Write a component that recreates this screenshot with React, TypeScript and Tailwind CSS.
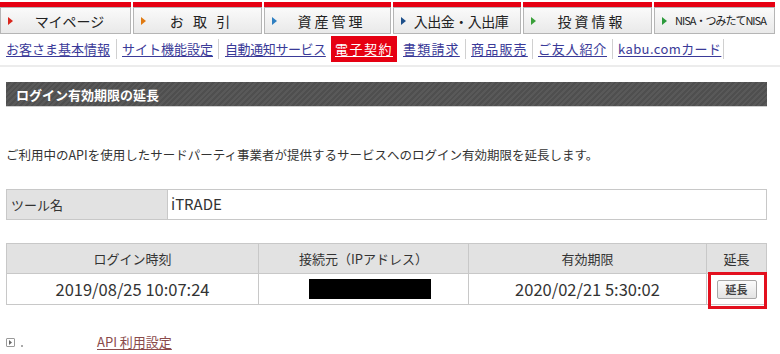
import React from "react";

const tabs = [
  { label: "マイページ", w: 131, color: "#d9261c", cls: "tracking-[0px] text-[14px]" },
  { label: "お 取 引", w: 129, color: "#e07a12", cls: "tracking-[3px] text-[14px]" },
  { label: "資産管理", w: 127, color: "#2f7fc1", cls: "tracking-[3px] text-[14px]" },
  { label: "入出金・入出庫", w: 128, color: "#1d4f8a", cls: "tracking-[-0.5px] text-[14px]" },
  { label: "投資情報", w: 129, color: "#3aa03a", cls: "tracking-[3px] text-[14px]" },
  { label: "NISA・つみたてNISA", w: 121, color: "#2c9a3c", cls: "tracking-[-1px] text-[11px]" },
];

function Sep({ l, r }: { l: string; r: string }) {
  return <span className={`${l} ${r} my-[3px] w-px bg-[#d0d0d0] shrink-0`} />;
}

function Link({ w, t, children }: { w: string; t: string; children: React.ReactNode }) {
  return (
    <span className={`${w} ${t} shrink-0 flex items-center text-[#3a3a98] underline underline-offset-2 whitespace-nowrap`}>
      {children}
    </span>
  );
}

export default function App() {
  return (
    <div
      className="relative w-[780px] h-[354px] overflow-hidden bg-white pt-[2px] text-[#333]"
      style={{ fontFamily: '"Noto Sans CJK JP", "Noto Sans", sans-serif' }}
    >
      {/* Top tabs */}
      <div className="flex gap-[2px]">
        {tabs.map((t, i) => (
          <div key={i} className="flex flex-col shrink-0" style={{ width: t.w }}>
            <div className="h-[5px] bg-[#e60012]" />
            <div className="h-[27px] flex items-center border border-[#b5b5b5] bg-[linear-gradient(#fafafa,#e9e9e9)] pl-[7px] overflow-hidden whitespace-nowrap">
              <svg width="5" height="8" viewBox="0 0 5 8" className="shrink-0">
                <polygon points="0,0 5,4 0,8" fill={t.color} />
              </svg>
              <span
                className={`flex-1 ${t.cls} ${i === 5 ? "text-left pl-[8px]" : "text-center pr-[4px]"} text-[#222] leading-none`}
              >
                {t.label}
              </span>
            </div>
          </div>
        ))}
      </div>

      {/* Sub links */}
      <div className="mt-[2px] h-[26px] flex items-stretch pl-[6px] text-[13px]">
        <Link w="w-[105px]" t="tracking-[0px]">お客さま基本情報</Link>
        <Sep l="ml-[5px]" r="mr-[5px]" />
        <Link w="w-[90px]" t="tracking-[0px]">サイト機能設定</Link>
        <Sep l="ml-[6px]" r="mr-[6px]" />
        <Link w="w-[100px]" t="tracking-[-0.4px]">自動通知サービス</Link>
        <span className="w-[6px] shrink-0" />
        <span className="w-[66px] shrink-0 flex items-center justify-center bg-[#e60012] text-white underline underline-offset-2 tracking-[1.5px] whitespace-nowrap">
          電子契約
        </span>
        <span className="w-[6px] shrink-0" />
        <Link w="w-[57px]" t="tracking-[1.2px]">書類請求</Link>
        <Sep l="ml-[5px]" r="mr-[5px]" />
        <Link w="w-[57px]" t="tracking-[1.2px]">商品販売</Link>
        <Sep l="ml-[4px]" r="mr-[5px]" />
        <Link w="w-[69px]" t="tracking-[0.8px]">ご友人紹介</Link>
        <Sep l="ml-[5px]" r="mr-[5px]" />
        <Link w="w-[100px]" t="tracking-[0.4px]">kabu.comカード</Link>
        <Sep l="ml-[5px]" r="mr-[0px]" />
      </div>
      <div className="mt-[3px] h-[2px] bg-[#ececec]" />

      {/* Content */}
      <div className="px-[6px] w-[773px]">
        <div className="mt-[15px] h-[25px] flex items-center pl-[10px] bg-[repeating-linear-gradient(135deg,#595959_0px,#595959_2px,#4f4f4f_2px,#4f4f4f_4px)] border-b border-[#cfcfcf]">
          <span className="text-white font-bold text-[13px] leading-none">ログイン有効期限の延長</span>
        </div>

        <p className="mt-[39px] text-[12.5px] leading-[18px] text-[#333] whitespace-nowrap">
          ご利用中のAPIを使用したサードパーティ事業者が提供するサービスへのログイン有効期限を延長します。
        </p>

        {/* Tool name */}
        <div className="mt-[25px] h-[31px] flex border border-[#c8c8c8] text-[13px]">
          <div className="w-[161px] flex items-center pl-[4px] bg-[#e2e2e2] border-r border-[#c8c8c8]">ツール名</div>
          <div className="flex-1 flex items-center pl-[3px] text-[15px]">iTRADE</div>
        </div>

        {/* Main table */}
        <div className="mt-[23px] border border-[#c8c8c8] text-[13px]">
          <div className="flex h-[30px] bg-[#e2e2e2] border-b border-[#c8c8c8]">
            <div className="w-[252px] flex items-center justify-center border-r border-[#c8c8c8]">ログイン時刻</div>
            <div className="w-[210px] flex items-center justify-center border-r border-[#c8c8c8]">接続元（IPアドレス）</div>
            <div className="w-[238px] flex items-center justify-center border-r border-[#c8c8c8]">有効期限</div>
            <div className="flex-1 flex items-center justify-center">延長</div>
          </div>
          <div className="flex h-[30px] bg-white">
            <div className="w-[252px] flex items-center justify-center border-r border-[#c8c8c8] text-[16.5px]">2019/08/25 10:07:24</div>
            <div className="w-[210px] flex items-center pl-[50px] border-r border-[#c8c8c8]">
              <div className="w-[122px] h-[20px] bg-black" />
            </div>
            <div className="w-[238px] flex items-center justify-center border-r border-[#c8c8c8] text-[16.5px]">2020/02/21 5:30:02</div>
            <div className="relative flex-1 flex items-center justify-center">
              <div className="absolute left-[1px] right-[-1px] top-[-2px] bottom-[-5px] border-[3px] border-[#e3101e]" />
              <button className="w-[40px] h-[19px] text-[11px] leading-none font-bold text-[#444] border border-[#a8a8a8] rounded-[2px] bg-[linear-gradient(#fbfbfb,#e3e3e3)]">
                延長
              </button>
            </div>
          </div>
        </div>

        {/* Bottom link */}
        <div className="mt-[30px] flex items-center h-[14px]">
          <div className="w-[9px] h-[9px] border border-[#999] rounded-[1px] flex items-center justify-center">
            <svg width="3" height="5" viewBox="0 0 3 5">
              <polygon points="0,0 3,2.5 0,5" fill="#666" />
            </svg>
          </div>
          <span className="ml-[6px] mt-[8px] w-[2px] h-[2px] bg-[#aaa]" />
          <span className="ml-[74px] text-[13px] text-[#8a4a4a] underline underline-offset-2">API 利用設定</span>
        </div>
      </div>
    </div>
  );
}
